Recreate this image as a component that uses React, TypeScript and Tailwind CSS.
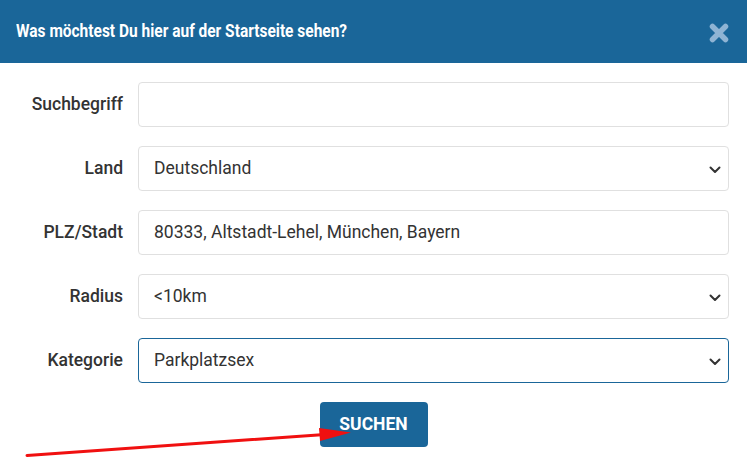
import React from "react";

const rows: { label: string; value: string; select: boolean; focus?: boolean }[] = [
  { label: "Suchbegriff", value: "", select: false },
  { label: "Land", value: "Deutschland", select: true },
  { label: "PLZ/Stadt", value: "80333, Altstadt-Lehel, München, Bayern", select: false },
  { label: "Radius", value: "<10km", select: true },
  { label: "Kategorie", value: "Parkplatzsex", select: true, focus: true },
];

function Chevron() {
  return (
    <svg width="12" height="8" viewBox="0 0 12 8" className="absolute right-[7px] top-[19px]">
      <path d="M1.5 1.5 L6 6 L10.5 1.5" fill="none" stroke="#333" strokeWidth="2" strokeLinecap="round" strokeLinejoin="round" />
    </svg>
  );
}

export default function App() {
  return (
    <div className="relative w-[747px] h-[464px] bg-white overflow-hidden" style={{ fontFamily: "Roboto, 'Liberation Sans', sans-serif" }}>
      <div className="h-[63px] bg-[#1a6699] flex items-center justify-between pl-[16px] pr-[18px]">
        <div
          className="text-white text-[19px] font-bold origin-left scale-x-[0.815] whitespace-nowrap"
          style={{ fontFamily: "Roboto, sans-serif" }}
        >
          Was möchtest Du hier auf der Startseite sehen?
        </div>
        <svg width="20" height="20" viewBox="0 0 20 20" className="mt-[3px]">
          <path d="M3.5 3.5 L16.5 16.5 M16.5 3.5 L3.5 16.5" stroke="#8fb4d4" strokeWidth="5.5" strokeLinecap="round" />
        </svg>
      </div>
      <div className="flex flex-col gap-[19px] pt-[19px] pr-[18px]">
        {rows.map((r) => (
          <div key={r.label} className="flex items-center">
            <div className="w-[124px] pr-[1px] text-right text-[17.5px] font-medium text-[#333]">{r.label}</div>
            <div
              className={`relative ml-[14px] flex-1 h-[45px] rounded-[4px] border bg-white flex items-center pl-[15px] text-[17.5px] text-[#333] ${
                r.focus ? "border-[#1a6699]" : "border-[#e0e0e0]"
              }`}
            >
              {r.value}
              {r.select && <Chevron />}
            </div>
          </div>
        ))}
      </div>
      <div className="flex justify-center pt-[19px]">
        <div className="w-[108px] h-[45px] rounded-[4px] bg-[#1a6699] text-white text-[17.5px] font-bold flex items-center justify-center">
          SUCHEN
        </div>
      </div>
      <svg className="absolute left-0 top-0" width="747" height="464" viewBox="0 0 747 464">
        <line x1="27" y1="455.5" x2="325" y2="434.5" stroke="#f01010" strokeWidth="3" strokeLinecap="round" />
        <polygon points="319,428 351,432.5 320,441" fill="#f01010" />
      </svg>
    </div>
  );
}
